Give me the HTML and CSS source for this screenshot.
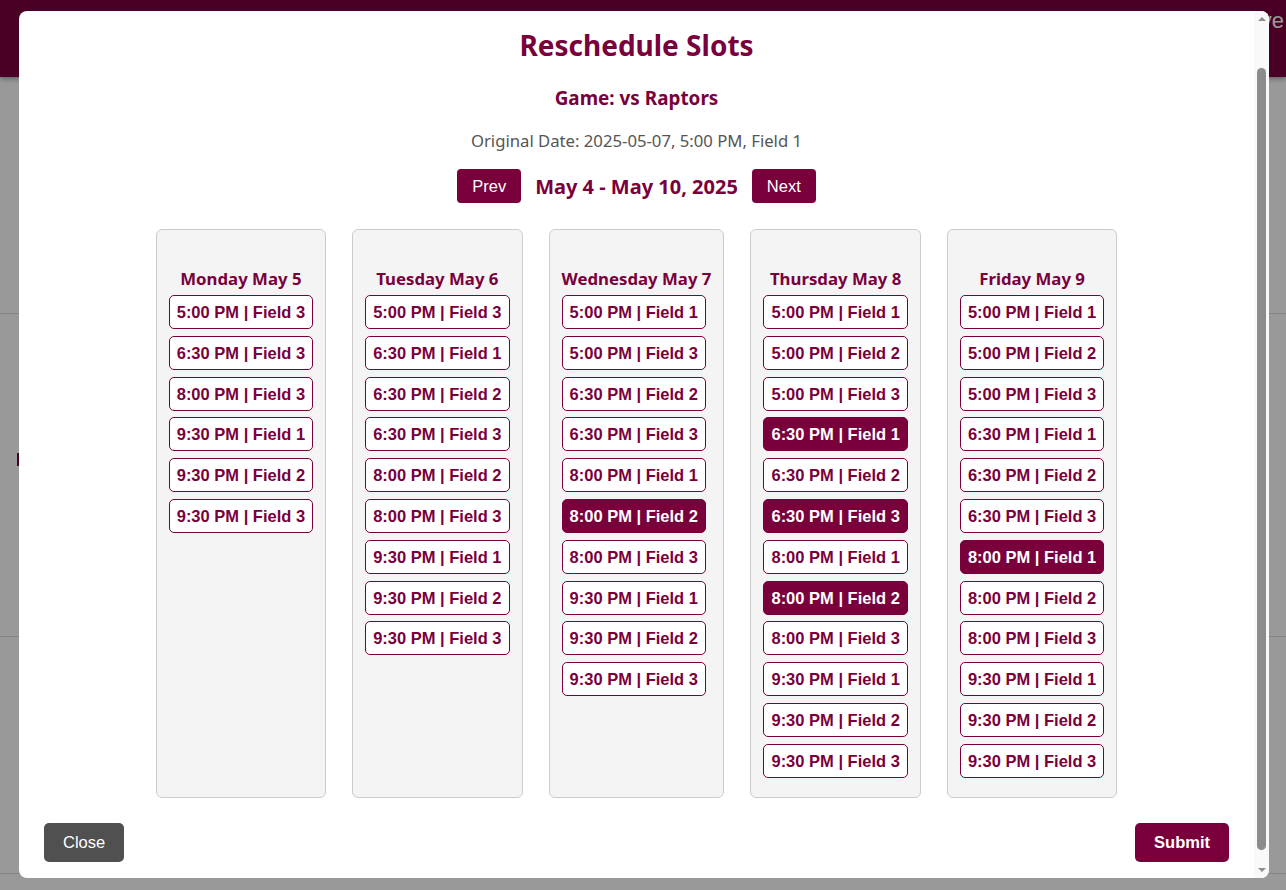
FILE: index.html
```html
<!DOCTYPE html>
<html>
<head>
<meta charset="utf-8">
<link rel="stylesheet" href="styles.css">
</head>
<body>
<header class="topbar">
  <span class="topbar-link">Leave</span>
</header>
<main class="page">
  <section class="page-section"></section>
  <section class="page-section page-section-mid"><span class="page-mark"></span></section>
  <section class="page-section"></section>
</main>
<div class="overlay"></div>
<div class="modal">
  <div class="modal-body">
    <h2 class="modal-title">Reschedule Slots</h2>
    <h3 class="game-title">Game: vs Raptors</h3>
    <p class="orig-date">Original Date: 2025-05-07, 5:00 PM, Field 1</p>
    <div class="week-nav">
      <button class="nav-btn">Prev</button>
      <span class="week-label">May 4 - May 10, 2025</span>
      <button class="nav-btn">Next</button>
    </div>
    <div class="days">
      <div class="day">
        <h4 class="day-title">Monday May 5</h4>
        <button class="slot">5:00 PM | Field 3</button>
        <button class="slot">6:30 PM | Field 3</button>
        <button class="slot">8:00 PM | Field 3</button>
        <button class="slot">9:30 PM | Field 1</button>
        <button class="slot">9:30 PM | Field 2</button>
        <button class="slot">9:30 PM | Field 3</button>
      </div>
      <div class="day">
        <h4 class="day-title">Tuesday May 6</h4>
        <button class="slot">5:00 PM | Field 3</button>
        <button class="slot">6:30 PM | Field 1</button>
        <button class="slot">6:30 PM | Field 2</button>
        <button class="slot">6:30 PM | Field 3</button>
        <button class="slot">8:00 PM | Field 2</button>
        <button class="slot">8:00 PM | Field 3</button>
        <button class="slot">9:30 PM | Field 1</button>
        <button class="slot">9:30 PM | Field 2</button>
        <button class="slot">9:30 PM | Field 3</button>
      </div>
      <div class="day">
        <h4 class="day-title">Wednesday May 7</h4>
        <button class="slot">5:00 PM | Field 1</button>
        <button class="slot">5:00 PM | Field 3</button>
        <button class="slot">6:30 PM | Field 2</button>
        <button class="slot">6:30 PM | Field 3</button>
        <button class="slot">8:00 PM | Field 1</button>
        <button class="slot selected">8:00 PM | Field 2</button>
        <button class="slot">8:00 PM | Field 3</button>
        <button class="slot">9:30 PM | Field 1</button>
        <button class="slot">9:30 PM | Field 2</button>
        <button class="slot">9:30 PM | Field 3</button>
      </div>
      <div class="day">
        <h4 class="day-title">Thursday May 8</h4>
        <button class="slot">5:00 PM | Field 1</button>
        <button class="slot">5:00 PM | Field 2</button>
        <button class="slot">5:00 PM | Field 3</button>
        <button class="slot selected">6:30 PM | Field 1</button>
        <button class="slot">6:30 PM | Field 2</button>
        <button class="slot selected">6:30 PM | Field 3</button>
        <button class="slot">8:00 PM | Field 1</button>
        <button class="slot selected">8:00 PM | Field 2</button>
        <button class="slot">8:00 PM | Field 3</button>
        <button class="slot">9:30 PM | Field 1</button>
        <button class="slot">9:30 PM | Field 2</button>
        <button class="slot">9:30 PM | Field 3</button>
      </div>
      <div class="day">
        <h4 class="day-title">Friday May 9</h4>
        <button class="slot">5:00 PM | Field 1</button>
        <button class="slot">5:00 PM | Field 2</button>
        <button class="slot">5:00 PM | Field 3</button>
        <button class="slot">6:30 PM | Field 1</button>
        <button class="slot">6:30 PM | Field 2</button>
        <button class="slot">6:30 PM | Field 3</button>
        <button class="slot selected">8:00 PM | Field 1</button>
        <button class="slot">8:00 PM | Field 2</button>
        <button class="slot">8:00 PM | Field 3</button>
        <button class="slot">9:30 PM | Field 1</button>
        <button class="slot">9:30 PM | Field 2</button>
        <button class="slot">9:30 PM | Field 3</button>
      </div>
    </div>
    <div class="modal-footer">
      <button class="btn-close">Close</button>
      <button class="btn-submit">Submit</button>
    </div>
  </div>
  <div class="scrollbar">
    <span class="scroll-arrow scroll-arrow-up"></span>
    <span class="scroll-thumb"></span>
    <span class="scroll-arrow scroll-arrow-down"></span>
  </div>
</div>
</body>
</html>
```

FILE: styles.css
```css
html, body {
  margin: 0;
  padding: 0;
  height: 100%;
  overflow: hidden;
  background: #ffffff;
  font-family: "Noto Sans", "Liberation Sans", sans-serif;
}

.topbar {
  height: 77px;
  background: #7a003c;
  box-shadow: 0 2px 5px rgba(0, 0, 0, 0.35);
  display: flex;
  justify-content: flex-end;
  align-items: flex-start;
  position: relative;
  z-index: 1;
}

.topbar-link {
  font-family: "Liberation Sans", Arial, sans-serif;
  font-size: 22px;
  line-height: 28px;
  color: #ffffff;
  margin-top: 7px;
  margin-right: 2px;
}

.page {
  display: flex;
  flex-direction: column;
}

.page-section {
  height: 236px;
  border-bottom: 1px solid #dcdcdc;
}

.page-section-mid {
  height: 322px;
  display: flex;
  align-items: flex-start;
}

.page-mark {
  width: 2px;
  height: 13px;
  margin-left: 17px;
  margin-top: 139px;
  background: #7a003c;
}

.overlay {
  position: fixed;
  inset: 0;
  background: rgba(0, 0, 0, 0.4);
  z-index: 5;
}

.modal {
  position: fixed;
  left: 19px;
  top: 11px;
  width: 1250px;
  height: 867px;
  background: #ffffff;
  border-radius: 8px;
  overflow: hidden;
  z-index: 10;
  display: flex;
}

.modal-body {
  flex: 1;
  min-width: 0;
  overflow: hidden;
  padding: 15px 25px 0;
  display: flex;
  flex-direction: column;
}

.modal-title {
  margin: 0;
  text-align: center;
  font-size: 28px;
  line-height: 38px;
  font-weight: 700;
  color: #7a003c;
}

.game-title {
  margin: 21px 0 0;
  text-align: center;
  font-size: 18.9px;
  line-height: 26px;
  font-weight: 700;
  color: #7a003c;
}

.orig-date {
  margin: 19px 0 0;
  text-align: center;
  font-size: 16.7px;
  line-height: 22px;
  color: #555555;
}

.week-nav {
  margin-top: 17px;
  display: flex;
  justify-content: center;
  align-items: center;
  gap: 14px;
}

.nav-btn {
  font-family: "Liberation Sans", Arial, sans-serif;
  font-size: 16.5px;
  line-height: 18px;
  height: 34px;
  padding: 0 15px;
  border: none;
  border-radius: 4px;
  background: #7a003c;
  color: #ffffff;
}

.week-label {
  font-size: 20px;
  font-weight: 700;
  color: #7a003c;
}

.days {
  margin-top: 26px;
  display: flex;
  justify-content: center;
  align-items: stretch;
  gap: 26px;
}

.day {
  background: #f4f4f4;
  border: 1px solid #cccccc;
  border-radius: 6px;
  padding: 37px 12px 19px;
  display: flex;
  flex-direction: column;
  align-items: flex-start;
  gap: 6.8px;
}

.day-title {
  align-self: stretch;
  margin: 0 0 -1.8px;
  text-align: center;
  font-size: 16.8px;
  line-height: 23px;
  font-weight: 700;
  color: #7a003c;
}

.slot {
  font-family: "Liberation Sans", Arial, sans-serif;
  font-size: 16.5px;
  font-weight: 700;
  line-height: 18px;
  height: 34px;
  padding: 0 7px;
  border: 1px solid #7a003c;
  border-radius: 5px;
  background: #ffffff;
  color: #7a003c;
  white-space: nowrap;
}

.slot.selected {
  background: #7a003c;
  color: #ffffff;
}

.modal-footer {
  margin-top: 25px;
  display: flex;
  justify-content: space-between;
  align-items: center;
}

.btn-close,
.btn-submit {
  font-family: "Liberation Sans", Arial, sans-serif;
  font-size: 16.5px;
  line-height: 19px;
  height: 39px;
  padding: 0 19px;
  border: none;
  border-radius: 5px;
  color: #ffffff;
}

.btn-close {
  background: #505050;
}

.btn-submit {
  background: #7a003c;
  font-weight: 700;
}

.scrollbar {
  width: 15px;
  flex: none;
  background: #f9f9f9;
  display: flex;
  flex-direction: column;
  align-items: center;
}

.scroll-arrow {
  height: 15px;
  width: 15px;
  flex: none;
  display: flex;
  align-items: center;
  justify-content: center;
}

.scroll-arrow::before {
  content: "";
  width: 0;
  height: 0;
  border-left: 4px solid transparent;
  border-right: 4px solid transparent;
}

.scroll-arrow-up::before {
  border-bottom: 4px solid #8c8c8c;
  margin-top: 1px;
}

.scroll-arrow-down::before {
  border-top: 4px solid #8c8c8c;
  margin-bottom: 1px;
}

.scroll-thumb {
  width: 9px;
  height: 782px;
  margin: 42px 0 13px;
  border-radius: 5px;
  background: #8c8c8c;
  flex: none;
}
```
